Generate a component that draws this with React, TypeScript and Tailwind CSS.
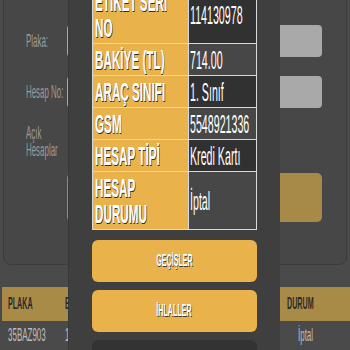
import React from 'react';

const ROWS = [
  { label: ['ETİKET SERİ', 'NO'], value: '114130978', dark: true },
  { label: ['BAKİYE (TL)'], value: '714.00', dark: false },
  { label: ['ARAÇ SINIFI'], value: '1. Sınıf', dark: true },
  { label: ['GSM'], value: '5548921336', dark: false },
  { label: ['HESAP TİPİ'], value: 'Kredi Kartı', dark: true },
  { label: ['HESAP', 'DURUMU'], value: 'İptal', dark: false },
];

// condensed look: narrow the glyphs, the font has no condensed face here
const Narrow: React.FC<{ children: React.ReactNode; className?: string }> = ({ children, className = '' }) => (
  <span className={`inline-block whitespace-nowrap ${className}`}>{children}</span>
);

const BackPage: React.FC = () => (
  <div className="flex flex-col h-full">
    <div className="mx-[3px] -mt-[20px] h-[285px] rounded-b-lg border border-[#3c3c3c] bg-[#474747] pl-[22px] pr-[24px] pt-[44px] flex flex-col gap-[19px] shrink-0">
      <div className="flex items-center h-[32px]">
        <div className="w-[41px] text-[18px] text-[#9a9a9a] leading-none">
          <Narrow className="origin-left scale-x-[0.44]">Plaka:</Narrow>
        </div>
        <div className="flex-1 h-[32px] rounded-[4px] bg-[#a9a9a9]" />
      </div>
      <div className="flex items-center h-[32px]">
        <div className="w-[41px] text-[18px] text-[#9a9a9a] leading-none">
          <Narrow className="origin-left scale-x-[0.44]">Hesap No:</Narrow>
        </div>
        <div className="flex-1 h-[32px] rounded-[4px] bg-[#a9a9a9]" />
      </div>
      <div className="flex h-[27px]">
        <div className="w-[41px] text-[18px] text-[#9a9a9a] leading-[17px] -mt-[2px] flex flex-col">
          <Narrow className="origin-left scale-x-[0.44]">Açık</Narrow>
          <Narrow className="origin-left scale-x-[0.44]">Hesaplar</Narrow>
        </div>
        <div className="flex-1" />
      </div>
      <div className="flex h-[49px]">
        <div className="w-[41px]" />
        <div className="flex-1 rounded-[5px] bg-[#a88a48]" />
      </div>
    </div>
    <div className="mt-[22px] ml-[2px] h-[34px] bg-[#a98b48] flex items-center text-[17px] font-bold text-[#2a2a2a] shrink-0">
      <div className="w-[63px] pl-[6px]"><Narrow className="origin-left scale-x-[0.42]">PLAKA</Narrow></div>
      <div className="w-[233px]"><Narrow className="origin-left scale-x-[0.42]">ETİKET SERİ NO</Narrow></div>
      <div><Narrow className="origin-left scale-x-[0.42]">DURUM</Narrow></div>
    </div>
    <div className="ml-[2px] h-[30px] flex items-center text-[19px] text-[#bdbdbd]">
      <div className="w-[63px] pl-[6px]"><Narrow className="origin-left scale-x-[0.42]">35BAZ903</Narrow></div>
      <div className="w-[233px]"><Narrow className="origin-left scale-x-[0.42]">114130978</Narrow></div>
      <div><Narrow className="origin-left scale-x-[0.42]">İptal</Narrow></div>
    </div>
  </div>
);

const ActionButton: React.FC<{ text?: string; dark?: boolean }> = ({ text, dark }) => (
  <div
    className={`h-[42px] rounded-[6px] flex items-center justify-center overflow-hidden ${
      dark ? 'bg-[#333333]' : 'bg-[#e9b24a]'
    }`}
  >
    {text && (
      <Narrow className="origin-center scale-x-[0.42] text-[17px] font-bold text-white [text-shadow:1px_1px_0_#3a3a3a]">
        {text}
      </Narrow>
    )}
  </div>
);

export default function App() {
  return (
    <div className="relative w-[350px] h-[350px] overflow-hidden bg-[#4a4a4a] font-['Liberation_Sans',sans-serif]">
      <BackPage />

      {/* modal sheet over the page */}
      <div className="absolute left-[68px] top-0 w-[212px] h-[350px] bg-[#3f3f3f] border-l border-[#393939] pl-[23px] pr-[23px]">
        <div className="-mt-[15px] border border-[#d9d9d9] flex flex-col">
          {ROWS.map((r, i) => (
            <div key={i} className={`flex ${i > 0 ? 'border-t border-[#d9d9d9]' : ''}`}>
              <div className="w-[95px] shrink-0 bg-[#e9b24a] px-[2px] pt-[3px] pb-[2px] overflow-hidden flex flex-col text-[26px] leading-[26px] font-bold text-white [text-shadow:1px_1px_0_#2e2e2e]">
                {r.label.map((l) => (
                  <Narrow key={l} className="origin-left scale-x-[0.45]">{l}</Narrow>
                ))}
              </div>
              <div
                className={`min-w-0 flex-1 border-l border-[#d9d9d9] px-[1px] overflow-hidden flex items-center text-[26px] leading-[26px] text-white ${
                  r.dark ? 'bg-[#313131]' : 'bg-[#474747]'
                }`}
              >
                <Narrow className="origin-left scale-x-[0.41]">{r.value}</Narrow>
              </div>
            </div>
          ))}
        </div>
        <div className="mt-[10px] flex flex-col gap-[8px]">
          <ActionButton text="GEÇİŞLER" />
          <ActionButton text="İHLALLER" />
          <ActionButton dark />
        </div>
      </div>
    </div>
  );
}
